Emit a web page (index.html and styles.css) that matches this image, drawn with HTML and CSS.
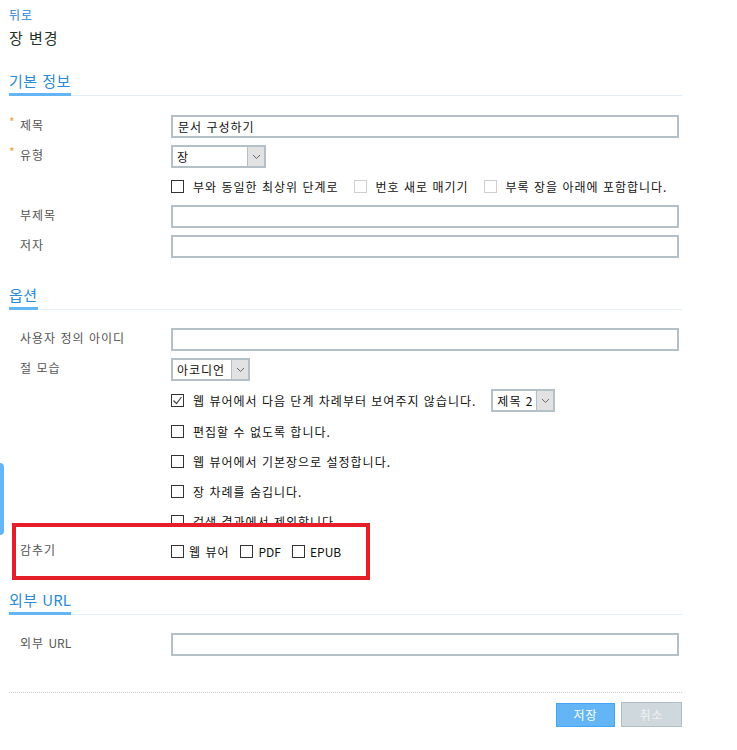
FILE: index.html
```html
<!DOCTYPE html>
<html lang="ko">
<head>
    <meta charset="UTF-8">
    <title>장 변경</title>
    <link rel="stylesheet" href="styles.css">
</head>
<body>

<div class="side-tab"></div>

<div class="page">
    <a class="back" href="#">뒤로</a>
    <h1 class="title">장 변경</h1>

    <!-- 기본 정보 -->
    <div class="section-head first"><h2>기본 정보</h2></div>
    <div class="form first">
        <div class="row">
            <div class="label"><span class="req">*</span>제목</div>
            <div class="field"><div class="input">문서 구성하기</div></div>
        </div>
        <div class="row">
            <div class="label"><span class="req">*</span>유형</div>
            <div class="field">
                <div class="select type-select"><span class="value">장</span><span class="arrow"><svg width="9" height="6" viewBox="0 0 9 6"><polyline points="1,1 4.5,4.5 8,1" fill="none" stroke="#666" stroke-width="1"/></svg></span></div>
            </div>
        </div>
        <div class="row">
            <div class="label"></div>
            <div class="field checks">
                <label class="check"><span class="box"></span>부와 동일한 최상위 단계로</label>
                <label class="check disabled"><span class="box"></span>번호 새로 매기기</label>
                <label class="check disabled"><span class="box"></span>부록 장을 아래에 포함합니다.</label>
            </div>
        </div>
        <div class="row">
            <div class="label">부제목</div>
            <div class="field"><div class="input"></div></div>
        </div>
        <div class="row">
            <div class="label">저자</div>
            <div class="field"><div class="input"></div></div>
        </div>
    </div>

    <!-- 옵션 -->
    <div class="section-head"><h2>옵션</h2></div>
    <div class="form">
        <div class="row">
            <div class="label">사용자 정의 아이디</div>
            <div class="field"><div class="input"></div></div>
        </div>
        <div class="row">
            <div class="label">절 모습</div>
            <div class="field">
                <div class="select shape-select"><span class="value">아코디언</span><span class="arrow"><svg width="9" height="6" viewBox="0 0 9 6"><polyline points="1,1 4.5,4.5 8,1" fill="none" stroke="#666" stroke-width="1"/></svg></span></div>
            </div>
        </div>
        <div class="row tall">
            <div class="label"></div>
            <div class="field checks">
                <label class="check"><span class="box"><svg width="11" height="11" viewBox="0 0 11 11"><polyline points="1.5,5.5 4.5,8.5 9.5,2" fill="none" stroke="#444" stroke-width="1.2"/></svg></span>웹 뷰어에서 다음 단계 차례부터 보여주지 않습니다.</label>
                <div class="select level-select"><span class="value">제목 2</span><span class="arrow"><svg width="9" height="6" viewBox="0 0 9 6"><polyline points="1,1 4.5,4.5 8,1" fill="none" stroke="#666" stroke-width="1"/></svg></span></div>
            </div>
        </div>
        <div class="row">
            <div class="label"></div>
            <div class="field checks"><label class="check"><span class="box"></span>편집할 수 없도록 합니다.</label></div>
        </div>
        <div class="row">
            <div class="label"></div>
            <div class="field checks"><label class="check"><span class="box"></span>웹 뷰어에서 기본장으로 설정합니다.</label></div>
        </div>
        <div class="row">
            <div class="label"></div>
            <div class="field checks"><label class="check"><span class="box"></span>장 차례를 숨깁니다.</label></div>
        </div>
        <div class="row">
            <div class="label"></div>
            <div class="field checks"><label class="check"><span class="box"></span>검색 결과에서 제외합니다.</label></div>
        </div>
        <div class="row hide-row">
            <div class="label">감추기</div>
            <div class="field checks small">
                <label class="check"><span class="box"></span>웹 뷰어</label>
                <label class="check"><span class="box"></span><span class="latin">PDF</span></label>
                <label class="check"><span class="box"></span><span class="latin">EPUB</span></label>
            </div>
        </div>
    </div>

    <!-- 외부 URL -->
    <div class="section-head"><h2>외부 <span class="latin">URL</span></h2></div>
    <div class="form">
        <div class="row">
            <div class="label">외부 <span class="latin">URL</span></div>
            <div class="field"><div class="input"></div></div>
        </div>
    </div>

    <div class="actions">
        <button class="btn save">저장</button>
        <button class="btn cancel">취소</button>
    </div>
</div>

</body>
</html>
```

FILE: styles.css
```css
body {
    margin: 0;
    font-family: "Noto Sans CJK KR", "Noto Sans", sans-serif;
    font-size: 12px;
    letter-spacing: 1px;
    color: #222;
    background: #fff;
}
.latin {
    letter-spacing: 0;
}
.page {
    width: 673px;
    padding: 0 0 0 9px;
}
.side-tab {
    position: absolute;
    left: 0;
    top: 463px;
    width: 4px;
    height: 72px;
    background-color: #64b5f6;
    border-radius: 0 4px 4px 0;
}
.back {
    display: block;
    margin-top: 6px;
    line-height: 18px;
    color: #1e7fd8;
    text-decoration: none;
}
.title {
    margin: 3px 0 0 0;
    font-size: 15px;
    font-weight: normal;
    line-height: 22px;
    color: #24332a;
}
.section-head {
    margin-top: 26px;
    border-bottom: 1px solid #e4eef6;
}
.section-head.first {
    margin-top: 21px;
}
.section-head h2 {
    display: inline-block;
    margin: 0 0 -1px 0;
    padding-bottom: 1px;
    font-size: 15px;
    font-weight: normal;
    line-height: 22px;
    letter-spacing: 0.5px;
    color: #2b8ad8;
    border-bottom: 3px solid #64b5f6;
}
.form {
    padding-top: 18px;
}
.form.first {
    padding-top: 19px;
}
.row {
    display: grid;
    grid-template-columns: 162px 508px;
    align-items: center;
    min-height: 23px;
    margin-bottom: 7px;
}
.row.tall {
    min-height: 25px;
}
.label {
    position: relative;
    padding-left: 11px;
    align-self: start;
    line-height: 20px;
    color: #555;
}
.req {
    position: absolute;
    left: 0;
    top: -3px;
    color: #f0a040;
}
.input {
    box-sizing: border-box;
    height: 23px;
    padding: 0 5px;
    line-height: 19px;
    border: 2px solid #b3c0c7;
    background: #fff;
    color: #111;
}
.select {
    box-sizing: border-box;
    display: inline-flex;
    height: 23px;
    border: 2px solid #b3c0c7;
    background: #fff;
    color: #111;
}
.select .value {
    flex: 1;
    padding-left: 4px;
    line-height: 19px;
    white-space: nowrap;
}
.select .arrow {
    display: flex;
    align-items: center;
    justify-content: center;
    width: 16px;
    background: #e2e2e2;
    border-left: 1px solid #b3c0c7;
}
.type-select {
    width: 95px;
}
.shape-select {
    width: 79px;
}
.level-select {
    width: 64px;
}
.checks {
    display: flex;
    align-items: center;
}
.check {
    display: flex;
    align-items: center;
    margin-right: 15px;
    line-height: 20px;
    white-space: nowrap;
    color: #111;
}
.check .box {
    box-sizing: border-box;
    display: inline-flex;
    align-items: center;
    justify-content: center;
    width: 13px;
    height: 13px;
    margin-right: 9px;
    border: 1px solid #333;
    background: #fff;
}
.check.disabled .box {
    border-color: #cfcfcf;
}
.small .check {
    margin-right: 11px;
}
.small .check .box {
    margin-right: 5px;
}
.hide-row {
    position: relative;
}
.hide-row::before {
    content: "";
    position: absolute;
    left: 3px;
    top: -17px;
    width: 350px;
    height: 49px;
    border: 4px solid #e61e2a;
    background: #fff;
}
.hide-row .label,
.hide-row .field {
    position: relative;
    z-index: 1;
}
.actions {
    display: flex;
    justify-content: flex-end;
    align-items: center;
    margin-top: 36px;
    padding-top: 9px;
    border-top: 1px dotted #cccccc;
}
.btn {
    font-family: "Noto Sans CJK KR", sans-serif;
    font-size: 12px;
    letter-spacing: 1px;
    color: #fff;
    padding: 0;
    margin-left: 6px;
}
.save {
    width: 59px;
    height: 24px;
    background-color: #64b5f6;
    border: 1px solid #42a5f5;
}
.cancel {
    width: 61px;
    height: 25px;
    background-color: #cfd8dc;
    border: 1px solid #b0bec5;
    color: #eef2f4;
}
```
